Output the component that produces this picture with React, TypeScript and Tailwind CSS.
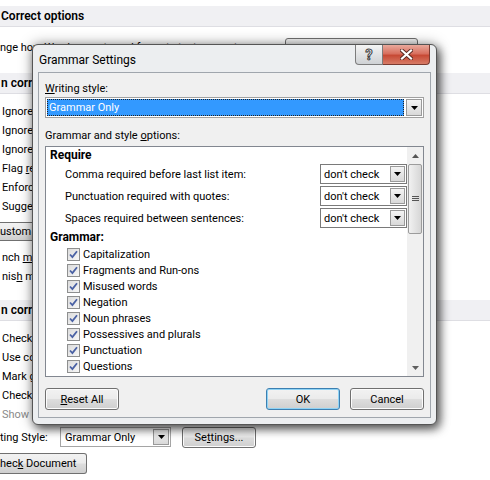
import React from 'react';

const DownTri = ({ className = '' }: { className?: string }) => (
  <svg width="7" height="4" viewBox="0 0 7 4" className={className}>
    <path d="M0 0h7L3.5 4z" fill="#000" />
  </svg>
);

const DropButton = ({ className = '' }: { className?: string }) => (
  <div
    className={`flex items-center justify-center border border-[#9a9a9a] bg-gradient-to-b from-[#f4f4f4] to-[#d9d9d9] ${className}`}
  >
    <DownTri />
  </div>
);

const Button = ({ children, className = '', focused = false }: { children: React.ReactNode; className?: string; focused?: boolean }) => (
  <div
    className={`flex items-center justify-center rounded-[3px] border ${
      focused ? 'border-[#3c7fb1] shadow-[inset_0_0_0_1px_#8fd3f5]' : 'border-[#707070] shadow-[inset_0_0_0_1px_#fcfcfc]'
    } bg-[linear-gradient(#f2f2f2_0%,#ebebeb_48%,#dddddd_52%,#cfcfcf_100%)] ${className}`}
  >
    <span>{children}</span>
  </div>
);

const Check = () => (
  <div className="flex h-[13px] w-[13px] items-center justify-center border border-[#8e8f8f] bg-gradient-to-br from-[#dcdcdc] to-[#f7f7f7]">
    <svg width="9" height="9" viewBox="0 0 9 9">
      <path d="M1 4.5l2.4 2.6L8 1.2" stroke="#4a61a4" strokeWidth="1.8" fill="none" />
    </svg>
  </div>
);

const DontCheck = () => (
  <div className="flex h-[20px] w-[87px] items-center border border-[#7a7a7a] bg-white pl-[3px]">
    <span className="flex-1">don't check</span>
    <DropButton className="mr-[1px] h-[16px] w-[15px]" />
  </div>
);

const Band = ({ text }: { text: string }) => (
  <div className="flex h-[21px] items-center border-b border-[#dedee3] bg-[#f0f0f3] pl-[1px] text-[12px] font-semibold whitespace-nowrap">
    {text}
  </div>
);

const Row = ({ children, className = '' }: { children: React.ReactNode; className?: string }) => (
  <div className={`flex h-[19px] items-center whitespace-nowrap pl-[2px] ${className}`}>
    <span>{children}</span>
  </div>
);

const grammarItems = [
  'Capitalization',
  'Fragments and Run-ons',
  'Misused words',
  'Negation',
  'Noun phrases',
  'Possessives and plurals',
  'Punctuation',
  'Questions',
  'Relative clauses',
];

const gradBtn = 'bg-[linear-gradient(#f2f2f2_0%,#ebebeb_48%,#dddddd_52%,#cfcfcf_100%)]';

export default function App() {
  return (
    <div className="relative h-[480px] w-[490px] overflow-hidden bg-white text-[11px] leading-none text-black font-['Roboto',sans-serif]">
      {/* page behind the dialog */}
      <div className="pt-[6px]">
        <Band text="Correct options" />
        <div className="flex h-[46px] items-start whitespace-nowrap">
          <span className="mt-[15px] min-w-0 flex-1 overflow-hidden">nge how Word corrects and formats text as you type:</span>
          <div className={`mr-[72px] mt-[11px] h-[23px] w-[133px] rounded-[3px] border border-[#707070] ${gradBtn}`} />
        </div>
        <Band text="n correcting spelling in Microsoft Office programs" />
        <div className="pt-[8px]">
          <Row>Ignore words in UPPERCASE</Row>
          <Row>Ignore words that contain numbers</Row>
          <Row>Ignore Internet and file addresses</Row>
          <Row>
            Flag <span className="underline">r</span>epeated words
          </Row>
          <Row>Enforce accented uppercase in French</Row>
          <Row>Suggest from main dictionary only</Row>
        </div>
        <div className={`mt-[6px] flex h-[19px] w-[110px] items-center overflow-hidden whitespace-nowrap border-y border-r border-[#707070] ${gradBtn}`}>
          <span>ustom Dictionaries...</span>
        </div>
        <div className="mt-[7px]">
          <Row className="pl-0">
            nch <span className="underline">m</span>odes:
          </Row>
          <Row className="pl-0">
            nis<span className="underline">h</span> modes:
          </Row>
        </div>
        <div className="mt-[14px]">
          <Band text="n correcting spelling and grammar in Word" />
        </div>
        <div className="pt-[8px]">
          <Row>Check spelling as you type</Row>
          <Row>Use contextual spelling</Row>
          <Row>Mark grammar errors as you type</Row>
          <Row>Check grammar with spelling</Row>
          <Row className="text-[#8a8a8a]">Show readability statistics</Row>
        </div>
        <div className="mt-[3px] flex h-[20px] items-center whitespace-nowrap">
          <span className="w-[60px]">ting Style:</span>
          <div className="flex h-[20px] w-[111px] items-center border border-[#a5a5a5] bg-white pl-[4px]">
            <span className="flex-1">Grammar Only</span>
            <DropButton className="mr-[1px] h-[16px] w-[16px]" />
          </div>
          <Button className="ml-[11px] h-[21px] w-[74px]">
            Se<span className="underline">t</span>tings...
          </Button>
        </div>
        <div className={`mt-[6px] flex h-[21px] w-[87px] items-center rounded-r-[3px] border-y border-r border-[#707070] ${gradBtn} whitespace-nowrap`}>
          <span>
            hec<span className="underline">k</span> Document
          </span>
        </div>
      </div>

      {/* dialog window */}
      <div className="absolute left-[32px] top-[44px] flex h-[381px] w-[405px] flex-col rounded-[6px] border border-[#555] bg-[#eceef0] shadow-[3px_4px_10px_rgba(0,0,0,0.6),0_0_14px_rgba(0,0,0,0.35)]">
        <div className="flex h-[27px] items-start">
          <span className="ml-[6px] mt-[9px] text-[12px] text-black">Grammar Settings</span>
          <div className="ml-auto mr-[6px] flex">
            <div className="flex h-[20px] w-[28px] items-center justify-center rounded-bl-[4px] border border-t-0 border-[#7c7c7c] bg-gradient-to-b from-[#f4f4f4] to-[#cfd2d5]">
              <span className="text-[14px] font-bold text-white [-webkit-text-stroke:1px_#3a3a3a]">?</span>
            </div>
            <div className="flex h-[20px] w-[47px] items-center justify-center rounded-br-[4px] border border-l-0 border-t-0 border-[#7a3a30] bg-[linear-gradient(#e9a99c_0%,#d8705f_45%,#c74a35_55%,#d77b66_100%)]">
              <svg width="13" height="11" viewBox="0 0 13 11">
                <path d="M2 1.5l9 8M11 1.5l-9 8" stroke="#5a2a22" strokeWidth="4" strokeLinecap="square" />
                <path d="M2 1.5l9 8M11 1.5l-9 8" stroke="#fff" strokeWidth="2.2" strokeLinecap="square" />
              </svg>
            </div>
          </div>
        </div>
        <div className="mx-[5px] mb-[6px] flex flex-1 flex-col border border-[#a0a6ad] bg-[#f0f0f0] px-[6px]">
          <div className="mt-[8px] flex h-[14px] items-center">
            <span>
              <span className="underline">W</span>riting style:
            </span>
          </div>
          <div className="mt-[2px] flex h-[21px] items-center border border-[#a0a0a0] bg-white p-[1px]">
            <div className="flex h-full flex-1 items-center border border-dotted border-[#222] bg-[#3399ff] pl-[1px] text-white">
              Grammar Only
            </div>
            <DropButton className="ml-[2px] h-[17px] w-[16px]" />
          </div>
          <div className="mt-[10px] flex h-[14px] items-center">
            <span>
              Grammar and style <span className="underline">o</span>ptions:
            </span>
          </div>
          <div className="mt-[4px] flex h-[231px] border border-[#828790] bg-white">
            <div className="flex-1 overflow-hidden pl-[4px]">
              <div className="flex h-[16px] items-center text-[12px] font-bold">Require</div>
              {[
                'Comma required before last list item:',
                'Punctuation required with quotes:',
                'Spaces required between sentences:',
              ].map((t, i) => (
                <div key={t} className={`${i === 0 ? 'mt-[1px]' : 'mt-[2px]'} flex h-[20px] items-center`}>
                  <span className="ml-[15px] flex-1">{t}</span>
                  <DontCheck />
                </div>
              ))}
              <div className="flex h-[18px] items-center text-[12px] font-bold">Grammar:</div>
              {grammarItems.map(t => (
                <div key={t} className="flex h-[16px] items-center pl-[17px]">
                  <Check />
                  <span className="ml-[3px]">{t}</span>
                </div>
              ))}
            </div>
            <div className="flex w-[16px] flex-col bg-[#f0f0f0]">
              <div className="flex h-[17px] items-center justify-center">
                <svg width="7" height="4" viewBox="0 0 7 4">
                  <path d="M0 4h7L3.5 0z" fill="#555" />
                </svg>
              </div>
              <div className="mx-[1px] flex h-[70px] items-center justify-center rounded-[2px] border border-[#9c9c9c] bg-gradient-to-r from-[#f1f1f1] to-[#d6d6d6]">
                <svg width="7" height="6" viewBox="0 0 7 6">
                  <path d="M0 0.5h7M0 2.5h7M0 4.5h7" stroke="#555" strokeWidth="1" />
                </svg>
              </div>
              <div className="flex-1" />
              <div className="flex h-[17px] items-center justify-center">
                <DownTri className="opacity-60" />
              </div>
            </div>
          </div>
          <div className="mt-[11px] flex">
            <Button className="h-[22px] w-[74px]">
              <span className="underline">R</span>eset All
            </Button>
            <Button focused className="ml-auto h-[22px] w-[74px]">
              OK
            </Button>
            <Button className="ml-[10px] h-[22px] w-[74px]">Cancel</Button>
          </div>
        </div>
      </div>
    </div>
  );
}
